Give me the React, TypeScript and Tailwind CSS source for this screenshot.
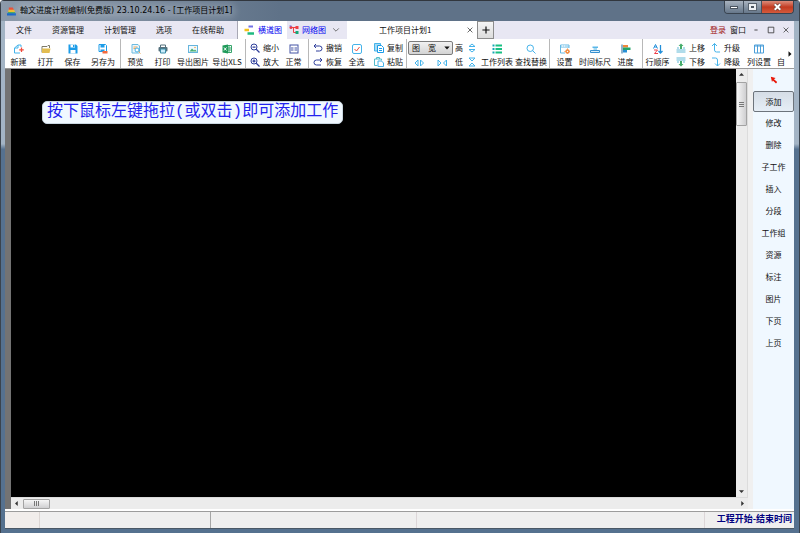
import type { ReactNode } from "react";

type DrawProps = { children: ReactNode; className?: string };

// every small glyph is drawn on a 20 x 20 grid
function Glyph({ children, className = "w-[10px] h-[10px]" }: DrawProps) {
  return (
    <svg
      viewBox="0 0 20 20"
      fill="none"
      strokeWidth="2"
      className={`shrink-0 ${className}`}
      aria-hidden="true"
    >
      {children}
    </svg>
  );
}

const BLUE = "#1c9ce8";
const SKY = "#45b3ea";
const NAVY = "#2f3f9b";

const icons = {
  create: (
    <>
      <path d="M12 18H1V8l7-6h6v4M8 2v6H1" stroke={SKY} />
      <path d="M15 7v9M10.500 11.500h9" stroke="#f04b3c" strokeWidth="2.500" />
    </>
  ),
  open: (
    <>
      <path d="M2 17V5h10l2-2h3v5" stroke="#7d7a68" />
      <path d="M2 18V9h17l-2 9z" fill="#e2bd51" />
    </>
  ),
  save: (
    <>
      <path d="M1 1h15l3 3v15H1z" fill={BLUE} />
      <path d="M5 1h9v6H5zM5 12h10v7H5z" fill="#fff" />
      <path d="M10 2h3v4h-3z" fill={BLUE} />
    </>
  ),
  saveAs: (
    <>
      <path d="M2 1h13l2 2v12H2z" fill="#fff" stroke={BLUE} />
      <path d="M5 2h8v5H5zM5 11h8v5H5z" fill={BLUE} />
      <path d="M9 14h10v5H9z" fill="#f26a3d" />
    </>
  ),
  preview: (
    <>
      <path d="M2 1h12l3 3v14H2z" fill="#eaf6fc" stroke="#6dbbe0" />
      <path d="M5 6h8M5 9h5" stroke="#f0a858" />
      <circle cx="12" cy="12" r="4" stroke={SKY} fill="#fff" />
      <path d="M15 15l4 4" stroke="#f0a858" />
    </>
  ),
  print: (
    <>
      <path d="M5 6V2h10v4" stroke="#55717d" />
      <rect x="1" y="6" width="18" height="9" rx="2" fill="#55717d" />
      <path d="M5 10h10v8H5z" fill="#c9ecfb" stroke="#3b8ca8" />
    </>
  ),
  picture: (
    <>
      <rect x="1" y="3" width="18" height="14" stroke="#67b5dc" fill="#eef9ff" />
      <path d="M3 15l5-6 4 4 2-2 4 4z" fill="#48ae70" />
      <circle cx="14" cy="7" r="1.500" fill="#efa53b" />
    </>
  ),
  xls: (
    <>
      <path d="M10 3h9v14h-9M10 8h9M10 12h9M14 3v14" stroke="#37a56c" />
      <path d="M1 3l11-2v18L1 17z" fill="#1f9a5a" />
      <path d="M4 7l5 6M9 7l-5 6" stroke="#fff" />
    </>
  ),
  zoomOut: (
    <>
      <circle cx="8" cy="8" r="6" stroke={NAVY} />
      <path d="M5 8h6M12.500 12.500L19 19" stroke={NAVY} strokeWidth="2.500" />
    </>
  ),
  zoomIn: (
    <>
      <circle cx="8" cy="8" r="6" stroke={NAVY} />
      <path d="M5 8h6M8 5v6M12.500 12.500L19 19" stroke={NAVY} strokeWidth="2.500" />
    </>
  ),
  normal: (
    <>
      <rect x="2" y="2" width="16" height="16" stroke="#4554a5" />
      <path d="M6 6v8M14 6v8M10 7v2M10 11v2" stroke="#4554a5" />
    </>
  ),
  undo: <path d="M6 2L2 6l4 4M2 6h11a5 5 0 010 10H6" stroke={NAVY} />,
  redo: <path d="M14 2l4 4-4 4M18 6H7a5 5 0 000 10h9" stroke={NAVY} />,
  selectAll: (
    <>
      <rect x="1" y="1" width="18" height="18" rx="3" stroke={SKY} />
      <path d="M5 10l4 4 6-8" stroke="#ee4b3a" />
    </>
  ),
  copy: (
    <>
      <path d="M1 1h12v15H1z" fill="#a9dcf4" stroke={SKY} />
      <path d="M7 5h8l4 4v10H7z" fill="#fff" stroke={BLUE} />
      <path d="M10 11h6M10 15h6" stroke={BLUE} />
    </>
  ),
  paste: (
    <>
      <path d="M7 17H1V4h14v3M5 4V1h6v3" stroke="#53bccb" />
      <path d="M8 8h7l4 4v7H8z" fill="#fff" stroke={SKY} />
    </>
  ),
  list: (
    <>
      <path d="M1 3h4M1 10h4M1 17h4" stroke="#16aab5" strokeWidth="4" />
      <path d="M7 3h13M7 10h13M7 17h13" stroke="#18bf83" strokeWidth="4" />
    </>
  ),
  find: (
    <>
      <circle cx="8.500" cy="8.500" r="6.500" stroke={SKY} />
      <path d="M13 13l6 6" stroke={SKY} />
    </>
  ),
  settings: (
    <>
      <path d="M10 18H1V2h17v6M1 6h17" stroke="#64b9e5" />
      <path d="M4 4h2M8 4h2" stroke="#fff" />
      <circle cx="15" cy="15" r="3" stroke="#f1883a" strokeWidth="3" />
      <path d="M15 9v2M15 19v1M9 15h2M19 15h1" stroke="#f1883a" />
    </>
  ),
  ruler: (
    <>
      <path d="M5 5h11v3H5z" fill="#5ab7e8" />
      <path d="M7 8h7v4H7z" fill="#a6d8f1" />
      <path d="M1 13h18v4H1z" fill="#d8eefa" stroke="#378fcf" />
    </>
  ),
  progress: (
    <>
      <path d="M2 1v18" stroke="#24689b" />
      <path d="M4 2h10v5H4z" fill="#ef873b" />
      <path d="M4 7h15v5H4z" fill="#23a568" />
      <path d="M4 12h8v5H4z" fill="#288fd5" />
    </>
  ),
  sort: (
    <>
      <path d="M1 9l4-8 4 8M3 6h5" stroke="#218ed9" />
      <path d="M2 12h7l-6 7h7" stroke="#ed3f4a" />
      <path d="M15 2v16M11 14l4 4 4-4" stroke="#218ed9" strokeWidth="2.500" />
    </>
  ),
  moveUp: (
    <>
      <path d="M10 1L5 6h3v6h4V6h3z" fill="#45ac6b" />
      <path d="M6 10H2M14 10h4M1 14h18M1 18h18" stroke="#63b9d6" />
    </>
  ),
  moveDown: (
    <>
      <path d="M10 19l-5-5h3V8h4v6h3z" fill="#45ac6b" />
      <path d="M6 10H2M14 10h4M1 2h18M1 6h18" stroke="#63b9d6" />
    </>
  ),
  promote: <path d="M2 6l5-5 5 5M7 1v13q0 4 4 4h7" stroke={SKY} />,
  demote: <path d="M2 2h7q4 0 4 4v12M8 13l5 5 5-5" stroke={SKY} />,
  columns: <path d="M1 2h18v16H1zM7 2v16M13 2v16M1 4h18" stroke="#4c9fd9" />,
  heightUp: <path d="M4 7l6-5 6 5zM4 13l6 5 6-5z" stroke={SKY} />,
  heightDown: <path d="M4 2l6 6 6-6zM4 18l6-6 6 6z" stroke={SKY} />,
  wider: <path d="M8 4L2 10l6 6zM13 4l6 6-6 6z" stroke={SKY} />,
  narrower: <path d="M2 4l6 6-6 6zM19 4l-6 6 6 6z" stroke={SKY} />,
  bars: (
    <>
      <path d="M9 3h9" stroke="#7372e6" strokeWidth="4" />
      <path d="M1 10h9" stroke="#f5c21b" strokeWidth="5" />
      <path d="M7 17h13" stroke="#1fba81" strokeWidth="5" />
    </>
  ),
  network: (
    <>
      <path d="M4 5h12M9 5v10h7" stroke="#ef3e45" />
      <circle cx="4" cy="5" r="3" fill="#ef3e45" />
      <path d="M13 2h6v6h-6z" fill="#ef3e45" />
      <path d="M13 12h6v6h-6z" fill="#15a779" />
      <path d="M1 2h4" stroke="#5b59dc" />
    </>
  ),
  pointer: <path d="M2 2l12 3-4 3 8 7-3 4-8-8-2 4z" fill="#e81708" />,
};

type IconName = keyof typeof icons;

function Icon({ name, className }: { name: IconName; className?: string }) {
  return <Glyph className={className}>{icons[name]}</Glyph>;
}

function Tool({ icon, label, wide }: { icon: IconName; label: string; wide?: boolean }) {
  return (
    <button
      className={`${wide ? "w-[34px]" : "w-[27px]"} shrink-0 flex flex-col items-center gap-[3px] pt-[5px]`}
    >
      <Icon name={icon} />
      <span>{label}</span>
    </button>
  );
}

function ToolPair({ items }: { items: [IconName, string][] }) {
  return (
    <div className="shrink-0 flex flex-col gap-1 pt-1 pl-1 pr-px">
      {items.map(([icon, label]) => (
        <button key={label} className="flex items-center gap-[3px]">
          <Icon name={icon} />
          {label}
        </button>
      ))}
    </div>
  );
}

function Group({ children, className = "" }: DrawProps) {
  return (
    <div className={`shrink-0 flex border-r border-[#b8b8b8] ${className}`}>{children}</div>
  );
}

function TitleBar() {
  return (
    <header className="h-[21px] shrink-0 flex items-start justify-between pl-[6px] pr-[5px] border-t border-[#31363d] bg-linear-to-r from-[#8c9aaa] via-[#5f7288] via-35% to-[#5f7288]">
      <div className="flex items-center gap-[3px] h-5">
        <Glyph className="w-[9px] h-[11px]">
          <path d="M4 1h9l3 7H4z" fill="#e9503b" />
          <path d="M3 6h13l2 6H3z" fill="#efbd32" />
          <path d="M2 11h16v4H2z" fill="#47a867" />
          <path d="M0 14h20v5H0z" fill="#1b69c9" />
        </Glyph>
        <h1 className="px-px text-black rounded bg-white/15 shadow-[0_0_6px_3px_rgba(255,255,255,0.15)] font-['DejaVu_Sans','Noto_Sans_CJK_SC',sans-serif]">
          翰文进度计划编制(免费版) 23.10.24.16 - [工作项目计划1]
        </h1>
      </div>
      <div className="flex h-[13px] border border-t-0 border-[#39434f] rounded-b-[4px] overflow-hidden">
        <button
          aria-label="最小化"
          className="w-[19px] flex justify-center items-center bg-linear-to-b from-[#a9b3bf] to-[#66778a] border-r border-[#46515f]"
        >
          <span className="w-[8px] h-[3px] bg-white border border-[#4c5560]" />
        </button>
        <button
          aria-label="最大化"
          className="w-[18px] flex justify-center items-center bg-linear-to-b from-[#a9b3bf] to-[#66778a] border-r border-[#46515f]"
        >
          <span className="w-[7px] h-[6px] border-2 border-[#eef1f4] bg-[#4c5560] outline-1 outline-[#59636f]" />
        </button>
        <button
          aria-label="关闭"
          className="w-[31px] flex justify-center items-center bg-linear-to-b from-[#dc8b79] via-[#c23a20] to-[#d45a3c]"
        >
          <Glyph className="w-[9px] h-[8px]">
            <path d="M3 3l14 14M17 3L3 17" stroke="#5b3834" strokeWidth="8" />
            <path d="M3 3l14 14M17 3L3 17" stroke="#fff" strokeWidth="5" />
          </Glyph>
        </button>
      </div>
    </header>
  );
}

function MenuBar() {
  return (
    <nav className="h-[18px] shrink-0 flex bg-[#e8e7f3]">
      <div className="w-[233px] shrink-0 flex pl-px border-r border-[#a8a8b4]">
        {["文件", "资源管理", "计划管理", "选项", "在线帮助"].map((m) => (
          <button key={m} className="px-[10px]">
            {m}
          </button>
        ))}
      </div>
      <button className="w-[49px] shrink-0 flex items-center gap-1 pl-[6px] bg-white text-[#0000f0]">
        <Icon name="bars" />
        横道图
      </button>
      <button className="w-[60px] shrink-0 flex items-center gap-[3px] pl-[2px] text-[#0000f0]">
        <Icon name="network" />
        网络图
        <Glyph className="w-[8px] h-[8px] ml-[3px]">
          <path d="M3 6l7 7 7-7" stroke="#555" />
        </Glyph>
      </button>
      <div className="w-[130px] shrink-0 flex items-center bg-white pl-8 pr-[3px]">
        <span>工作项目计划1</span>
        <button aria-label="关闭标签" className="ml-auto">
          <Glyph className="w-[8px] h-[8px]">
            <path d="M4 4l12 12M16 4L4 16" stroke="#444" />
          </Glyph>
        </button>
      </div>
      <button
        aria-label="新标签"
        className="w-[17px] shrink-0 flex items-center justify-center border border-[#8c8c8c] bg-linear-to-b from-[#f5f5f5] to-[#dcdcdc]"
      >
        <Glyph className="w-[8px] h-[8px]">
          <path d="M10 1v18M1 10h18" stroke="#111" strokeWidth="3" />
        </Glyph>
      </button>
      <div className="ml-auto flex items-center gap-1 pr-[3px]">
        <button className="text-[#a01414]">登录</button>
        <button>窗口</button>
        <button aria-label="最小化子窗口" className="w-[11px] flex justify-center">
          <Glyph className="w-[8px] h-[8px]">
            <path d="M6 10h8" stroke="#222" />
          </Glyph>
        </button>
        <button aria-label="还原子窗口" className="w-[11px] flex justify-center">
          <Glyph className="w-[8px] h-[8px]">
            <path d="M3 3h14v14H3z" stroke="#333" />
          </Glyph>
        </button>
        <button aria-label="关闭子窗口" className="w-[11px] flex justify-center">
          <Glyph className="w-[8px] h-[8px]">
            <path d="M4 4l12 12M16 4L4 16" stroke="#444" />
          </Glyph>
        </button>
      </div>
    </nav>
  );
}

function Toolbar() {
  return (
    <div className="h-[30px] shrink-0 flex bg-white border-b border-[#9a9a9a]">
      <div className="flex-1 min-w-0 flex overflow-hidden">
        <Group>
          <Tool icon="create" label="新建" />
          <Tool icon="open" label="打开" />
          <Tool icon="save" label="保存" />
          <Tool icon="saveAs" label="另存为" wide />
        </Group>
        <Group className="px-px">
          <Tool icon="preview" label="预览" />
          <Tool icon="print" label="打印" />
          <Tool icon="picture" label="导出图片" wide />
          <Tool icon="xls" label="导出XLS" wide />
        </Group>
        <Group className="pr-px">
          <ToolPair items={[["zoomOut", "缩小"], ["zoomIn", "放大"]]} />
          <Tool icon="normal" label="正常" />
        </Group>
        <Group className="pr-[2px]">
          <ToolPair items={[["undo", "撤销"], ["redo", "恢复"]]} />
          <Tool icon="selectAll" label="全选" />
          <ToolPair items={[["copy", "复制"], ["paste", "粘贴"]]} />
        </Group>
        <Group className="px-px">
          <div className="w-[45px] flex flex-col gap-[3px] pt-[2px]">
            <div className="relative flex">
              <select
                aria-label="缩放方式"
                className="appearance-none w-full h-[14px] px-[3px] border border-[#7c7c7c] rounded-[2px] bg-linear-to-b from-[#f2f2f2] to-[#d4d4d4] whitespace-pre"
              >
                <option>图{"\u3000"}宽</option>
              </select>
              <Glyph className="w-[6px] h-[6px] absolute right-[3px] top-1 pointer-events-none">
                <path d="M1 5h18l-9 10z" fill="#111" />
              </Glyph>
            </div>
            <div className="flex justify-around">
              <button aria-label="加宽">
                <Icon name="wider" />
              </button>
              <button aria-label="变窄">
                <Icon name="narrower" />
              </button>
            </div>
          </div>
          <div className="flex flex-col gap-1 pt-1 px-[2px]">
            <span>高</span>
            <span>低</span>
          </div>
          <div className="flex flex-col gap-1 pt-1 pl-[2px] pr-[3px]">
            <button aria-label="增高">
              <Icon name="heightUp" />
            </button>
            <button aria-label="降低">
              <Icon name="heightDown" />
            </button>
          </div>
          <Tool icon="list" label="工作列表" wide />
          <Tool icon="find" label="查找替换" wide />
        </Group>
        <Group className="pl-px pr-[3px]">
          <Tool icon="settings" label="设置" />
          <Tool icon="ruler" label="时间标尺" wide />
          <Tool icon="progress" label="进度" />
        </Group>
        <div className="shrink-0 flex gap-px pl-px">
          <Tool icon="sort" label="行顺序" />
          <ToolPair items={[["moveUp", "上移"], ["moveDown", "下移"]]} />
          <ToolPair items={[["promote", "升级"], ["demote", "降级"]]} />
          <Tool icon="columns" label="列设置" wide />
          <button className="self-start pt-[18px]">自</button>
        </div>
      </div>
      <button aria-label="更多工具" className="w-[8px] shrink-0 flex items-center justify-center">
        <Glyph className="w-[6px] h-[6px]">
          <path d="M5 1v18l10-9z" fill="#111" />
        </Glyph>
      </button>
    </div>
  );
}

function ScrollArrow({ d, label }: { d: string; label: string }) {
  return (
    <button aria-label={label} className="w-[11px] h-[11px] shrink-0 flex items-center justify-center">
      <Glyph className="w-[5px] h-[5px]">
        <path d={d} fill="#333" />
      </Glyph>
    </button>
  );
}

function Workspace() {
  return (
    <main className="flex-1 min-w-0 flex flex-col">
      <div className="flex-1 min-h-0 flex">
        <div className="flex-1 bg-black pl-[31px] pt-8">
          <p className="w-fit h-[23px] px-1 flex items-center rounded-[5px] border border-[#c9d6e0] bg-[#f0f8ff] text-[16px] leading-[21px] text-[#2222ee] font-['Liberation_Mono','Noto_Sans_CJK_SC',monospace]">
            按下鼠标左键拖拉(或双击)即可添加工作
          </p>
        </div>
        <div className="w-[12px] shrink-0 flex flex-col bg-[#ececec] border-r border-[#dcdcdc]">
          <ScrollArrow label="向上滚动" d="M0 15h20L10 4z" />
          <div className="h-[44px] mt-[2px] flex flex-col items-center justify-center gap-px border border-[#a3a3a3] rounded-[1px] bg-linear-to-r from-[#f6f6f6] to-[#cfcfd1]">
            <span className="w-[5px] h-px bg-[#777]" />
            <span className="w-[5px] h-px bg-[#777]" />
            <span className="w-[5px] h-px bg-[#777]" />
          </div>
          <div className="mt-auto">
            <ScrollArrow label="向下滚动" d="M0 5h20L10 16z" />
          </div>
        </div>
      </div>
      <div className="h-[12px] shrink-0 flex items-center bg-[#ececec] border-t border-[#dcdcdc]">
        <ScrollArrow label="向左滚动" d="M15 0v20L4 10z" />
        <div className="w-[27px] h-[10px] ml-px flex items-center justify-center gap-px border border-[#a3a3a3] rounded-[1px] bg-linear-to-b from-[#f6f6f6] to-[#cfcfd1]">
          <span className="w-px h-[5px] bg-[#777]" />
          <span className="w-px h-[5px] bg-[#777]" />
          <span className="w-px h-[5px] bg-[#777]" />
        </div>
        <div className="ml-auto">
          <ScrollArrow label="向右滚动" d="M5 0v20l11-10z" />
        </div>
      </div>
    </main>
  );
}

const actions = ["添加", "修改", "删除", "子工作", "插入", "分段", "工作组", "资源", "标注", "图片", "下页", "上页"];

function SidePanel() {
  return (
    <aside className="w-[41px] shrink-0 flex flex-col bg-[#f0f8ff]">
      <button aria-label="选择" className="h-[22px] flex items-center justify-center">
        <Icon name="pointer" className="w-[8px] h-[8px]" />
      </button>
      {actions.map((a, i) => (
        <button
          key={a}
          className={
            i === 0
              ? "h-[21px] border border-[#6d747c] rounded-[2px] bg-linear-to-b from-[#d5dde6] to-[#e6eef6]"
              : "h-[22px]"
          }
        >
          {a}
        </button>
      ))}
    </aside>
  );
}

function StatusBar() {
  return (
    <footer className="h-[17px] shrink-0 flex items-center bg-[#efefef] border-t border-[#9c9c9c]">
      <span className="w-[35px] h-full border-r border-[#dcd6d4] bg-[#f1edeb]" />
      <span className="w-[171px] h-full border-r border-[#a6a6a6]" />
      <span className="w-[206px] h-full border-r border-[#dcd6d8]" />
      <span className="ml-auto h-full flex items-center pl-3 pr-[2px] pb-[2px] border-l border-[#dcd6d8] text-[9px] font-bold text-[#000080]">
        工程开始-结束时间
      </span>
    </footer>
  );
}

export default function App() {
  return (
    <div className="h-screen flex flex-col overflow-hidden rounded-t-[4px] bg-linear-to-b from-[#a3b4c5] from-27% to-[#55718f] to-28% text-[8px] leading-[10px] text-[#111] whitespace-nowrap font-['Noto_Sans_CJK_SC',sans-serif] border-x border-[#3a434d]">
      <TitleBar />
      <div className="flex-1 min-h-0 flex flex-col ml-1 mr-[5px] mb-1 border-b border-[#4a5866] bg-[#f0f0f0]">
        <MenuBar />
        <Toolbar />
        <div className="flex-1 min-h-0 flex">
          <div className="w-[6px] shrink-0 bg-[#737373]" />
          <Workspace />
          <div className="w-[5px] shrink-0 bg-[#f0f0f0]" />
          <SidePanel />
        </div>
        <div className="h-[2px] shrink-0 bg-white" />
        <StatusBar />
      </div>
    </div>
  );
}
